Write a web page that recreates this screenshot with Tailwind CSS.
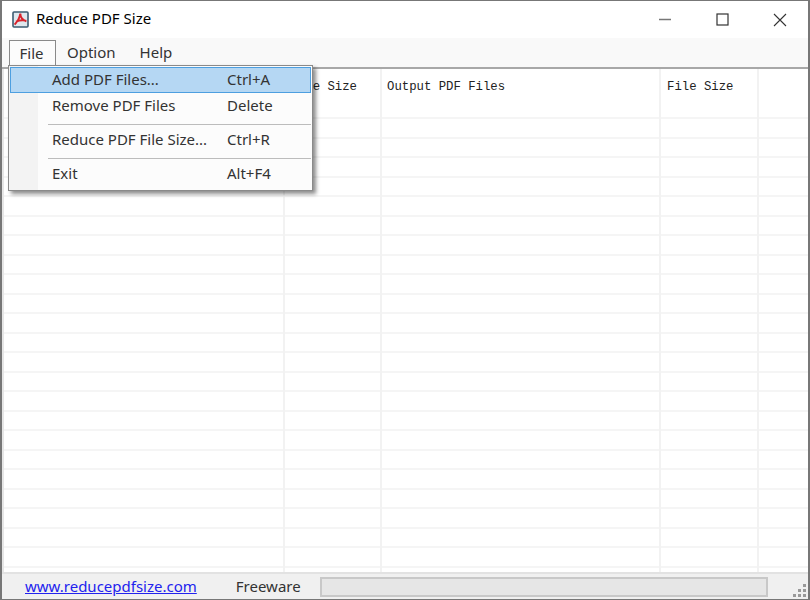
<!DOCTYPE html>
<html lang="en">
<head>
<meta charset="utf-8">
<title>Reduce PDF Size</title>
<script src="https://cdn.jsdelivr.net/npm/@tailwindcss/browser@4"></script>
</head>
<body class="bg-white">
<div class="relative w-[810px] h-[600px] flex flex-col overflow-hidden bg-white font-['Noto_Sans','Open_Sans',sans-serif] text-[#1a1a1a] text-[15px]">
  <div class="flex-1 min-h-0 flex flex-col border-t border-l-2 border-r-2 border-b border-t-[#777] border-l-[#777] border-r-[#777] border-b-[#777]">
    <!-- title bar -->
    <div class="h-[37px] shrink-0 flex items-center bg-white">
      <svg class="ml-[10px] mb-[1px] w-[17px] h-[17px]" viewBox="0 0 17 17" aria-hidden="true">
        <rect x="1" y="1" width="15" height="15" rx="1" fill="#dfe8ee" stroke="#3d5c72" stroke-width="1.6"/>
        <path d="M8.3 2.5C7.8 6.5 6 10 2.6 13.6M8.3 2.5C8.3 6.5 10.5 9 14.4 10.4M4 10.6C7 9.4 10.5 8.8 14 9.6" fill="none" stroke="#d8232b" stroke-width="2"/>
      </svg>
      <span class="ml-[7px] mb-[2px] text-black text-[15px]">Reduce PDF Size</span>
      <div class="ml-auto flex items-center h-full">
        <svg class="w-[14px] h-[14px] mr-[44px]" viewBox="0 0 14 14" aria-hidden="true"><path d="M1 6.5H13" stroke="#777" stroke-width="1.5"/></svg>
        <svg class="w-[13px] h-[13px] mr-[44px]" viewBox="0 0 13 13" aria-hidden="true"><rect x="1" y="1" width="11" height="11" fill="none" stroke="#333" stroke-width="1.2"/></svg>
        <svg class="w-[14px] h-[14px] mr-[21px]" viewBox="0 0 14 14" aria-hidden="true"><path d="M1 1L13 13M13 1L1 13" stroke="#333" stroke-width="1.1"/></svg>
      </div>
    </div>
    <!-- menu bar -->
    <div class="h-[31px] shrink-0 flex items-end bg-[#f9f9f9] border-b-2 border-b-[#a8a8a8] pl-[7px] text-[#333]">
      <div class="w-[47px] h-[27px] flex items-center justify-center pr-[2px] pb-[2px] border border-b-0 border-[#8a8a8a] bg-[#fcfcfc]">File</div>
      <div class="ml-[11px] h-[27px] pb-[2px] flex items-center">Option</div>
      <div class="ml-[24px] h-[27px] pb-[2px] flex items-center">Help</div>
    </div>
    <!-- list -->
    <div class="flex-1 min-h-0 flex border-l-2 border-l-[#e6e6e6] bg-[repeating-linear-gradient(to_bottom,#ffffff_0,#ffffff_17.5px,#f5f5f5_17.5px,#f5f5f5_19.5px)] bg-[position:0_31px] font-['Liberation_Mono',monospace] text-[12.3px] text-[#222]">
      <div class="w-[281px] shrink-0 border-r-2 border-r-[#f2f2f2]"><div class="h-[33px] bg-white"></div></div>
      <div class="w-[97px] shrink-0 border-r-2 border-r-[#f2f2f2]"><div class="h-[33px] pt-[4px] bg-white flex items-center justify-end pr-[23px]">File Size</div></div>
      <div class="w-[279px] shrink-0 border-r-2 border-r-[#f2f2f2]"><div class="h-[33px] pt-[4px] bg-white flex items-center pl-[5px]">Output PDF Files</div></div>
      <div class="w-[98px] shrink-0 border-r-2 border-r-[#f2f2f2]"><div class="h-[33px] pt-[4px] bg-white flex items-center pl-[6px]">File Size</div></div>
      <div class="flex-1"><div class="h-[33px] bg-white"></div></div>
    </div>
    <!-- status bar -->
    <div class="h-[27px] shrink-0 flex items-center bg-[#f0f0f0] border-t-2 border-t-[#e2e2e2]">
      <a href="#" class="ml-[23px] text-[#2222ee] underline text-[15px]">www.reducepdfsize.com</a>
      <span class="ml-[39px] text-[#333]">Freeware</span>
      <div class="ml-[19px] w-[448px] h-[20px] bg-[#e6e6e6] border-2 border-[#c8c8c8]"></div>
      <div class="ml-auto mr-[2px] self-end mb-[2px] grid grid-cols-3 gap-[2px] w-[13px]" aria-hidden="true">
        <i></i><i></i><i class="w-[3px] h-[3px] bg-[#999]"></i>
        <i></i><i class="w-[3px] h-[3px] bg-[#999]"></i><i class="w-[3px] h-[3px] bg-[#999]"></i>
        <i class="w-[3px] h-[3px] bg-[#999]"></i><i class="w-[3px] h-[3px] bg-[#999]"></i><i class="w-[3px] h-[3px] bg-[#999]"></i>
      </div>
    </div>
  </div>
  <!-- File menu -->
  <div class="absolute left-[8px] top-[65px] w-[305px] h-[126px] bg-[linear-gradient(to_right,#f3f3f3_0,#f3f3f3_29px,#fcfcfc_29px)] border border-[#8a8a8a] shadow-[3px_3px_4px_rgba(0,0,0,0.45)] p-[1px] text-[#333]">
    <div class="h-[26px] pb-[2px] flex items-center bg-[#b5d7f3] border border-[#4d9fe0]">
      <span class="ml-[41px] w-[175px]">Add PDF Files...</span><span>Ctrl+A</span>
    </div>
    <div class="h-[26px] pb-[2px] flex items-center">
      <span class="ml-[42px] w-[175px]">Remove PDF Files</span><span>Delete</span>
    </div>
    <div class="h-[8px] pt-[2px] ml-[38px] flex items-center"><div class="w-full h-[1px] bg-[#bcbcbc]"></div></div>
    <div class="h-[26px] pb-[2px] flex items-center">
      <span class="ml-[42px] w-[175px]">Reduce PDF File Size...</span><span>Ctrl+R</span>
    </div>
    <div class="h-[8px] pt-[2px] ml-[38px] flex items-center"><div class="w-full h-[1px] bg-[#bcbcbc]"></div></div>
    <div class="h-[26px] pb-[2px] flex items-center">
      <span class="ml-[42px] w-[175px]">Exit</span><span>Alt+F4</span>
    </div>
  </div>
</div>
</body>
</html>
